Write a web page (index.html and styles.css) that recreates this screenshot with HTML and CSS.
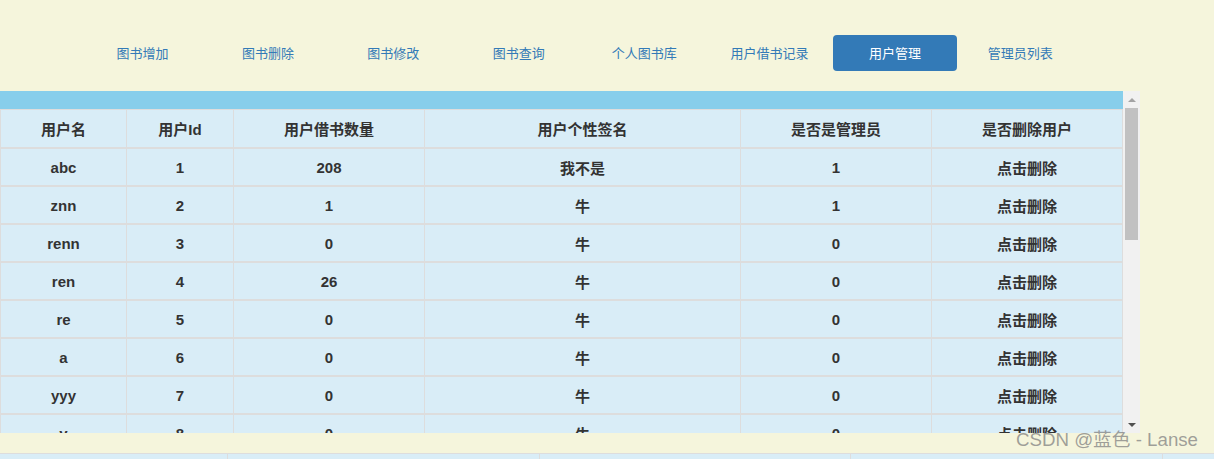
FILE: index.html
```html
<!DOCTYPE html>
<html lang="zh-CN">
<head>
<meta charset="utf-8">
<title>用户管理</title>
<link rel="stylesheet" href="styles.css">
</head>
<body>
<nav class="nav">
  <a class="nav-item">图书增加</a>
  <a class="nav-item">图书删除</a>
  <a class="nav-item">图书修改</a>
  <a class="nav-item">图书查询</a>
  <a class="nav-item">个人图书库</a>
  <a class="nav-item">用户借书记录</a>
  <a class="nav-item active">用户管理</a>
  <a class="nav-item">管理员列表</a>
</nav>
<div class="panel">
  <div class="panel-main">
    <div class="bar"></div>
    <table class="users">
      <colgroup>
        <col class="c1"><col class="c2"><col class="c3"><col class="c4"><col class="c5"><col class="c6">
      </colgroup>
      <thead>
        <tr><th>用户名</th><th>用户Id</th><th>用户借书数量</th><th>用户个性签名</th><th>是否是管理员</th><th>是否删除用户</th></tr>
      </thead>
      <tbody>
        <tr><td>abc</td><td>1</td><td>208</td><td>我不是</td><td>1</td><td>点击删除</td></tr>
        <tr><td>znn</td><td>2</td><td>1</td><td>牛</td><td>1</td><td>点击删除</td></tr>
        <tr><td>renn</td><td>3</td><td>0</td><td>牛</td><td>0</td><td>点击删除</td></tr>
        <tr><td>ren</td><td>4</td><td>26</td><td>牛</td><td>0</td><td>点击删除</td></tr>
        <tr><td>re</td><td>5</td><td>0</td><td>牛</td><td>0</td><td>点击删除</td></tr>
        <tr><td>a</td><td>6</td><td>0</td><td>牛</td><td>0</td><td>点击删除</td></tr>
        <tr><td>yyy</td><td>7</td><td>0</td><td>牛</td><td>0</td><td>点击删除</td></tr>
        <tr><td>y</td><td>8</td><td>0</td><td>牛</td><td>0</td><td>点击删除</td></tr>
      </tbody>
    </table>
  </div>
  <div class="scrollbar">
    <div class="sb-btn"><span class="tri-up"></span></div>
    <div class="sb-track"><div class="sb-thumb"></div></div>
    <div class="sb-btn"><span class="tri-down"></span></div>
  </div>
</div>
<div class="footer-row">
  <div class="fcell w1"></div>
  <div class="fcell w2"></div>
  <div class="fcell w3"></div>
  <div class="fcell w4"></div>
  <div class="fcell w5"></div>
</div>
<div class="watermark">CSDN @蓝色 - Lanse</div>
</body>
</html>
```
FILE: styles.css
```css
html, body {
  margin: 0;
  padding: 0;
}
body {
  background: #f5f5dc;
  font-family: Arial, "Liberation Sans", "Noto Sans CJK SC", sans-serif;
  color: #333;
  width: 1214px;
  height: 459px;
  overflow: hidden;
  position: relative;
}
.nav {
  display: flex;
  gap: 1.4px;
  padding: 35px 0 0 80.6px;
  margin-bottom: 20px;
}
.nav-item {
  box-sizing: border-box;
  width: 124px;
  height: 36px;
  padding-bottom: 2px;
  display: flex;
  align-items: center;
  justify-content: center;
  font-size: 13px;
  color: #337ab7;
  border-radius: 4px;
  font-family: "Noto Sans CJK SC", sans-serif;
}
.nav-item.active {
  background: #337ab7;
  color: #fff;
}
.panel {
  display: flex;
  width: 1140px;
  height: 342px;
}
.panel-main {
  width: 1123px;
  height: 342px;
  overflow: hidden;
}
.bar {
  height: 18px;
  background: #87ceeb;
}
.users {
  border-collapse: separate;
  border-spacing: 0;
  table-layout: fixed;
  width: 1123px;
  background: #d9edf7;
}
.c1 { width: 127px; }
.c2 { width: 107px; }
.c3 { width: 191px; }
.c4 { width: 316px; }
.c5 { width: 191px; }
.c6 { width: 191px; }
.users th,
.users td {
  box-sizing: border-box;
  height: 38px;
  padding: 0;
  text-align: center;
  vertical-align: middle;
  font-size: 15px;
  font-weight: bold;
  color: #333;
  border-right: 1px solid #dddddd;
  border-bottom: 2px solid #dddddd;
  font-family: Arial, "Liberation Sans", "Noto Sans CJK SC", sans-serif;
}
.users th {
  height: 40px;
  border-top: 1px solid #dddddd;
}
.users th:first-child,
.users td:first-child {
  border-left: 1px solid #dddddd;
}
.scrollbar {
  width: 17px;
  background: #f1f1f1;
  display: flex;
  flex-direction: column;
}
.sb-btn {
  height: 17px;
  display: flex;
  align-items: center;
  justify-content: center;
}
.tri-up {
  width: 0;
  height: 0;
  border-left: 4px solid transparent;
  border-right: 4px solid transparent;
  border-bottom: 4px solid #a3a3a3;
}
.tri-down {
  width: 0;
  height: 0;
  border-left: 4px solid transparent;
  border-right: 4px solid transparent;
  border-top: 4px solid #505050;
}
.sb-track {
  flex: 1;
}
.sb-thumb {
  margin: 0 2px;
  height: 132px;
  background: #c1c1c1;
}
.footer-row {
  display: flex;
  margin-top: 20px;
  height: 6px;
  border-top: 1px solid #dddddd;
  background: #d9edf7;
}
.fcell {
  box-sizing: border-box;
  border-right: 1px solid #dddddd;
}
.w1 { width: 228px; }
.w2 { width: 312px; }
.w3 { width: 311px; }
.w4 { width: 312px; }
.w5 { flex: 1; border-right: none; }
.watermark {
  position: absolute;
  left: 1016px;
  top: 424px;
  font-size: 18.7px;
  color: rgba(130, 130, 130, 0.75);
  font-family: "Liberation Sans", "Noto Sans CJK SC", sans-serif;
  white-space: nowrap;
}
```
